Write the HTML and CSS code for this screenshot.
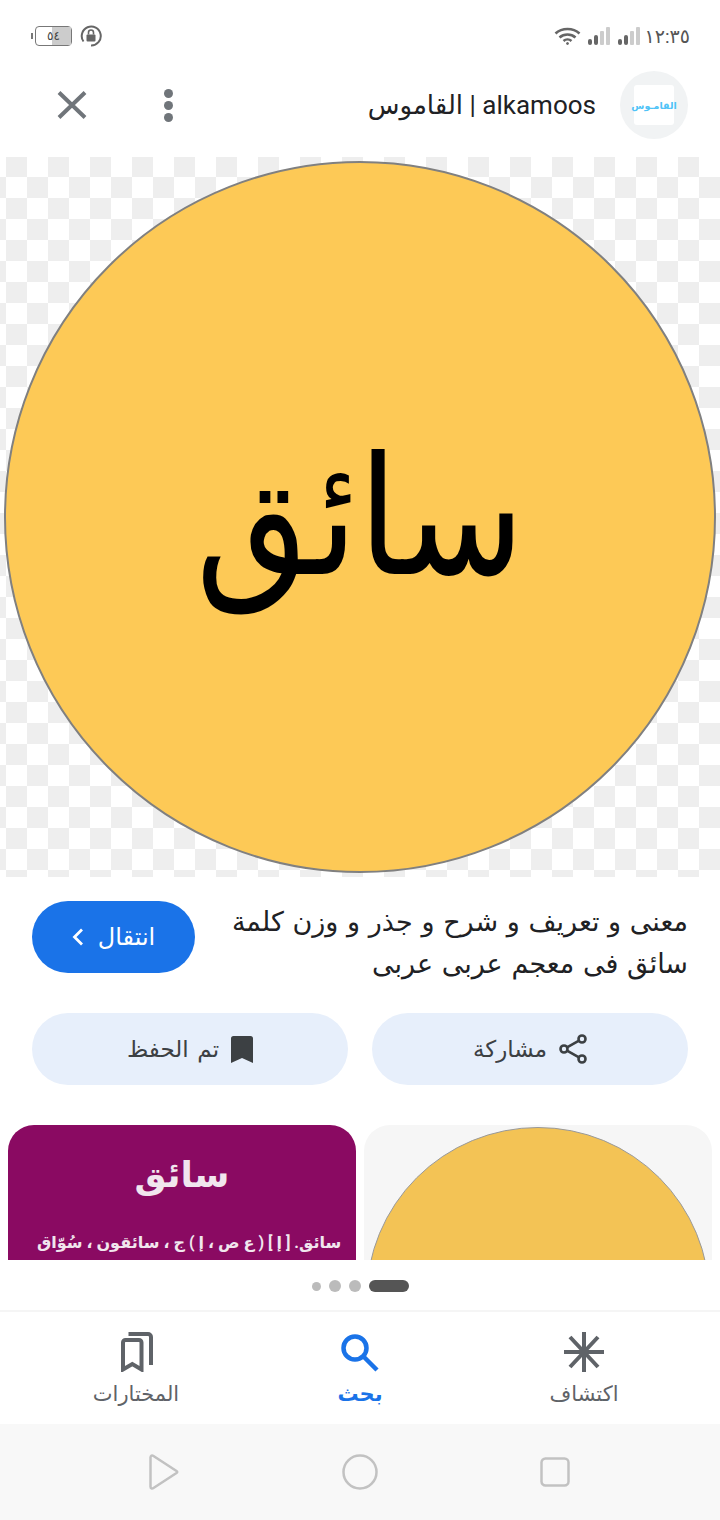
FILE: index.html
```html
<!DOCTYPE html>
<html lang="ar" dir="rtl">
<head>
    <meta charset="UTF-8">
    <meta name="viewport" content="width=device-width, initial-scale=1.0">
    <title>القاموس</title>
    <link rel="stylesheet" href="styles.css">
</head>
<body>
    <!-- status bar -->
    <div class="status">
        <div class="status__group">
            <span class="status__time">١٢:٣٥</span>
            <svg class="signal" width="22" height="18" viewBox="0 0 22 18"><rect x="0" y="12" width="4" height="6" rx="2" fill="#666"/><rect x="6" y="8" width="4" height="10" rx="2" fill="#666"/><rect x="12" y="4" width="4" height="14" rx="1" fill="#ccc"/><rect x="18" y="0" width="4" height="18" rx="1" fill="#ccc"/></svg>
            <svg class="signal" width="22" height="18" viewBox="0 0 22 18"><rect x="0" y="12" width="4" height="6" rx="2" fill="#666"/><rect x="6" y="8" width="4" height="10" rx="2" fill="#666"/><rect x="12" y="4" width="4" height="14" rx="1" fill="#ccc"/><rect x="18" y="0" width="4" height="18" rx="1" fill="#ccc"/></svg>
            <svg class="wifi" width="27" height="18" viewBox="0 0 27 18" fill="none" stroke="#666" stroke-width="2.6"><path d="M1.5 6.5C8 .5 19 .5 25.5 6.5"/><path d="M5.5 10.5C10 6.5 17 6.5 21.500 10.500"/><path d="M9.500 14C11.800 12 15.200 12 17.500 14"/><circle cx="13.500" cy="16.500" r="1" fill="#666" stroke-width="1"/></svg>
        </div>
        <div class="status__group status__group--left">
            <svg class="lock" width="22" height="22" viewBox="0 0 22 22" fill="none"><path d="M3.500 16.500A9.500 9.500 0 1 1 11 20.500" stroke="#666" stroke-width="2"/><rect x="6.500" y="9.500" width="9" height="7" rx="1" fill="#666"/><path d="M8.500 9.500V7.500a2.500 2.500 0 0 1 5 0v2" stroke="#666" stroke-width="1.600"/></svg>
            <div class="battery"><span class="battery__level"></span><span class="battery__num">٥٤</span></div>
        </div>
    </div>

    <!-- title row -->
    <header class="top">
        <div class="top__logo"><span class="top__logo-box">القامـوس</span></div>
        <div class="top__title">alkamoos | القاموس</div>
        <div class="top__more"><i></i><i></i><i></i></div>
        <svg class="top__close" width="30" height="28" viewBox="0 0 30 28" stroke="#70757a" stroke-width="4" fill="none"><path d="M2 1.500L28 26.500M28 1.500L2 26.500"/></svg>
    </header>

    <section class="hero">
        <div class="hero__circle"><span class="hero__word">سائق</span></div>
    </section>

    <section class="info">
        <p class="info__text">معنى و تعريف و شرح و جذر و وزن كلمة سائق فى معجم عربى عربى</p>
        <a class="info__go">انتقال
            <svg width="12" height="18" viewBox="0 0 12 18" fill="none" stroke="#fff" stroke-width="2.800"><path d="M10 1.500L2.500 9L10 16.500"/></svg>
        </a>
    </section>

    <section class="actions">
        <button class="actions__btn">
            <svg width="28" height="30" viewBox="0 0 28 30" fill="none" stroke="#3c4043" stroke-width="2.600"><circle cx="23" cy="5" r="3.500"/><circle cx="5" cy="15" r="3.500"/><circle cx="23" cy="25" r="3.500"/><path d="M8 13.300L20 6.700M8 16.700L20 23.300"/></svg>
            مشاركة
        </button>
        <button class="actions__btn">
            <svg width="22" height="27" viewBox="0 0 22 27"><path d="M2.500 0H19.500A2.500 2.500 0 0 1 22 2.500V27L11 22L0 27V2.500A2.500 2.500 0 0 1 2.500 0Z" fill="#3c4043"/></svg>
            تم الحفظ
        </button>
    </section>

    <section class="thumbs">
        <article class="thumb thumb--plain"><div class="thumb__circle"></div></article>
        <article class="thumb thumb--purple">
            <h3 class="thumb__head">سائق</h3>
            <p class="thumb__line">سائق. [ إ ] ( ع ص ، إ ) ج ، سائقون ، سُوّاق</p>
        </article>
    </section>

    <div class="dots"><span class="dots__pill"></span><span></span><span></span><span class="dots__small"></span></div>

    <nav class="nav">
        <a class="nav__item">
            <svg width="40" height="40" viewBox="0 0 40 40" stroke="#5f6368" stroke-width="4" fill="none"><path d="M20 0V40M0 20H40M6 5L34 35M34 5L6 35"/></svg>
            <span>اكتشاف</span>
        </a>
        <a class="nav__item nav__item--active">
            <svg width="40" height="40" viewBox="0 0 40 40" stroke="#1a73e8" stroke-width="4.500" fill="none"><circle cx="15" cy="16" r="11.500"/><path d="M23.500 24.500L37 38"/></svg>
            <span>بحث</span>
        </a>
        <a class="nav__item">
            <svg width="40" height="40" viewBox="0 0 40 40" fill="none" stroke="#5f6368" stroke-width="4"><path d="M7 37.500V10.500a2.500 2.500 0 0 1 2.500-2.500H23a2.500 2.500 0 0 1 2.500 2.500V37.500L16.300 32Z"/><path d="M12.500 2H32a3 3 0 0 1 3 3V33"/></svg>
            <span>المختارات</span>
        </a>
    </nav>

    <div class="sys">
        <svg width="30" height="30" viewBox="0 0 30 30" fill="none" stroke="#c2c2c2" stroke-width="2.500" stroke-linejoin="round"><rect x="1.500" y="1.500" width="27" height="27" rx="4"/></svg>
        <svg width="36" height="36" viewBox="0 0 36 36" fill="none" stroke="#c2c2c2" stroke-width="2.500"><circle cx="18" cy="18" r="16.500"/></svg>
        <svg width="30" height="36" viewBox="0 0 30 36" fill="none" stroke="#c2c2c2" stroke-width="2.500" stroke-linejoin="round"><path d="M1.500 3.500C1.500 1.500 3 1 4.500 2L27.500 17C28.500 17.700 28.500 18.300 27.500 19L4.500 34C3 35 1.500 34.500 1.500 32.500Z"/></svg>
    </div>
</body>
</html>
```
FILE: styles.css
```css
*,
*:before,
*:after{
    box-sizing: border-box;
}

html, body{
    margin: 0;
    padding: 0;
}

body{
    width: 720px;
    height: 1520px;
    overflow: hidden;
    background: #fff;
    font-family: Roboto, "DejaVu Sans", sans-serif;
    color: #202124;
}

/* status bar */
.status{
    height: 71px;
    padding: 26px 30px 0 31px;
    display: flex;
    justify-content: space-between;
    align-items: flex-start;
}

.status__group{
    display: flex;
    align-items: center;
    gap: 8px;
    height: 20px;
}

.status__group--left{
    gap: 8px;
}

.status__time{
    font-size: 19px;
    color: #555;
    margin-left: -3px;
}

.wifi{
    margin-right: -1px;
}

.battery{
    position: relative;
    width: 37px;
    height: 20px;
    border: 1.500px solid #777;
    border-radius: 4px;
    margin-left: 4px;
    display: flex;
    align-items: center;
    justify-content: center;
}

.battery:before{
    content: "";
    position: absolute;
    left: -5px;
    top: 6px;
    width: 2px;
    height: 6px;
    background: #777;
}

.battery__level{
    position: absolute;
    right: 0;
    top: 0;
    bottom: 0;
    width: 19px;
    background: #ccc;
}

.battery__num{
    position: relative;
    font-size: 12px;
    color: #444;
}

/* title row */
.top{
    height: 68px;
    padding: 0 32px 0 57px;
    display: flex;
    align-items: center;
}

.top__logo{
    width: 68px;
    height: 68px;
    border-radius: 50%;
    background: #f1f3f4;
    display: flex;
    align-items: center;
    justify-content: center;
    flex-shrink: 0;
}

.top__logo-box{
    width: 40px;
    height: 40px;
    border-radius: 3px;
    background: #fff;
    color: #4fc3f7;
    font-size: 9.500px;
    font-weight: bold;
    white-space: nowrap;
    display: flex;
    align-items: center;
    justify-content: center;
}

.top__title{
    margin-right: 24px;
    font-size: 26px;
    white-space: nowrap;
    flex: 1;
}

.top__more{
    display: flex;
    flex-direction: column;
    gap: 3px;
    margin-left: 77px;
}

.top__more i{
    display: block;
    width: 9px;
    height: 9px;
    border-radius: 50%;
    background: #70757a;
}

/* big picture */
.hero{
    margin-top: 18px;
    height: 720px;
    padding: 4px;
    background-color: #fff;
    background-image: conic-gradient(#eee 25%, #fff 0 50%, #eee 0 75%, #fff 0);
    background-size: 42px 42px;
    background-position: 6px 20px;
}

.hero__circle{
    width: 712px;
    height: 712px;
    border-radius: 50%;
    background: #fdc956;
    border: 2px solid #808080;
    display: flex;
    align-items: center;
    justify-content: center;
}

.hero__word{
    font-family: "DejaVu Sans", serif;
    font-size: 165px;
    line-height: 1;
    color: #000;
    transform: scaleX(.885);
}

/* text + go button */
.info{
    padding: 24px 32px 0;
    display: flex;
    justify-content: space-between;
    align-items: flex-start;
}

.info__text{
    margin: 0;
    width: 470px;
    font-size: 27px;
    word-spacing: 2px;
    line-height: 42px;
    color: #202124;
}

.info__go{
    width: 163px;
    height: 72px;
    border-radius: 36px;
    background: #1a73e8;
    color: #fff;
    font-size: 24px;
    display: flex;
    align-items: center;
    justify-content: center;
    gap: 14px;
}

.actions{
    padding: 28px 32px 0;
    display: flex;
    gap: 24px;
}

.actions__btn{
    flex: 1;
    height: 72px;
    border: none;
    border-radius: 36px;
    background: #e7effb;
    color: #3c4043;
    font-family: inherit;
    font-size: 23px;
    word-spacing: 3px;
    display: flex;
    align-items: center;
    justify-content: center;
    gap: 12px;
}

/* thumbnails */
.thumbs{
    margin-top: 40px;
    padding: 0 8px;
    height: 135px;
    overflow: hidden;
    display: flex;
    gap: 8px;
}

.thumb{
    width: 348px;
    flex: none;
    height: 300px;
    border-radius: 26px;
}

.thumb--plain{
    background: #f6f6f6;
    padding: 2px;
}

.thumb__circle{
    width: 344px;
    height: 344px;
    border-radius: 50%;
    background: #f3c355;
    border: 1px solid #999;
}

.thumb--purple{
    background: #8a0a62;
    color: #f1e6ee;
    text-align: center;
}

.thumb__head{
    margin: 15px 0 0;
    font-size: 36px;
    line-height: 70px;
    font-weight: bold;
}

.thumb__line{
    margin: 23px 0 0;
    padding: 0 8px 0 22px;
    font-size: 16px;
    font-weight: bold;
    white-space: nowrap;
}

/* pager dots */
.dots{
    height: 50px;
    padding-top: 2px;
    display: flex;
    align-items: center;
    justify-content: center;
    gap: 8px;
}

.dots span{
    width: 12px;
    height: 12px;
    border-radius: 50%;
    background: #bbb;
}

.dots .dots__pill{
    width: 40px;
    border-radius: 6px;
    background: #555;
}

.dots .dots__small{
    width: 9px;
    height: 9px;
}

/* bottom nav */
.nav{
    height: 114px;
    border-top: 2px solid #f5f5f5;
    display: flex;
    padding: 20px 24px 0;
}

.nav__item{
    flex: 1;
    display: flex;
    flex-direction: column;
    align-items: center;
    gap: 10px;
    font-size: 21px;
    color: #5f6368;
}

.nav__item--active{
    color: #1a73e8;
    font-weight: bold;
}

.sys{
    height: 96px;
    background: #f8f8f8;
    padding: 30px 150px 0 149px;
    display: flex;
    justify-content: space-between;
    align-items: flex-start;
}

.sys svg:first-child{
    margin-top: 3px;
}
```
